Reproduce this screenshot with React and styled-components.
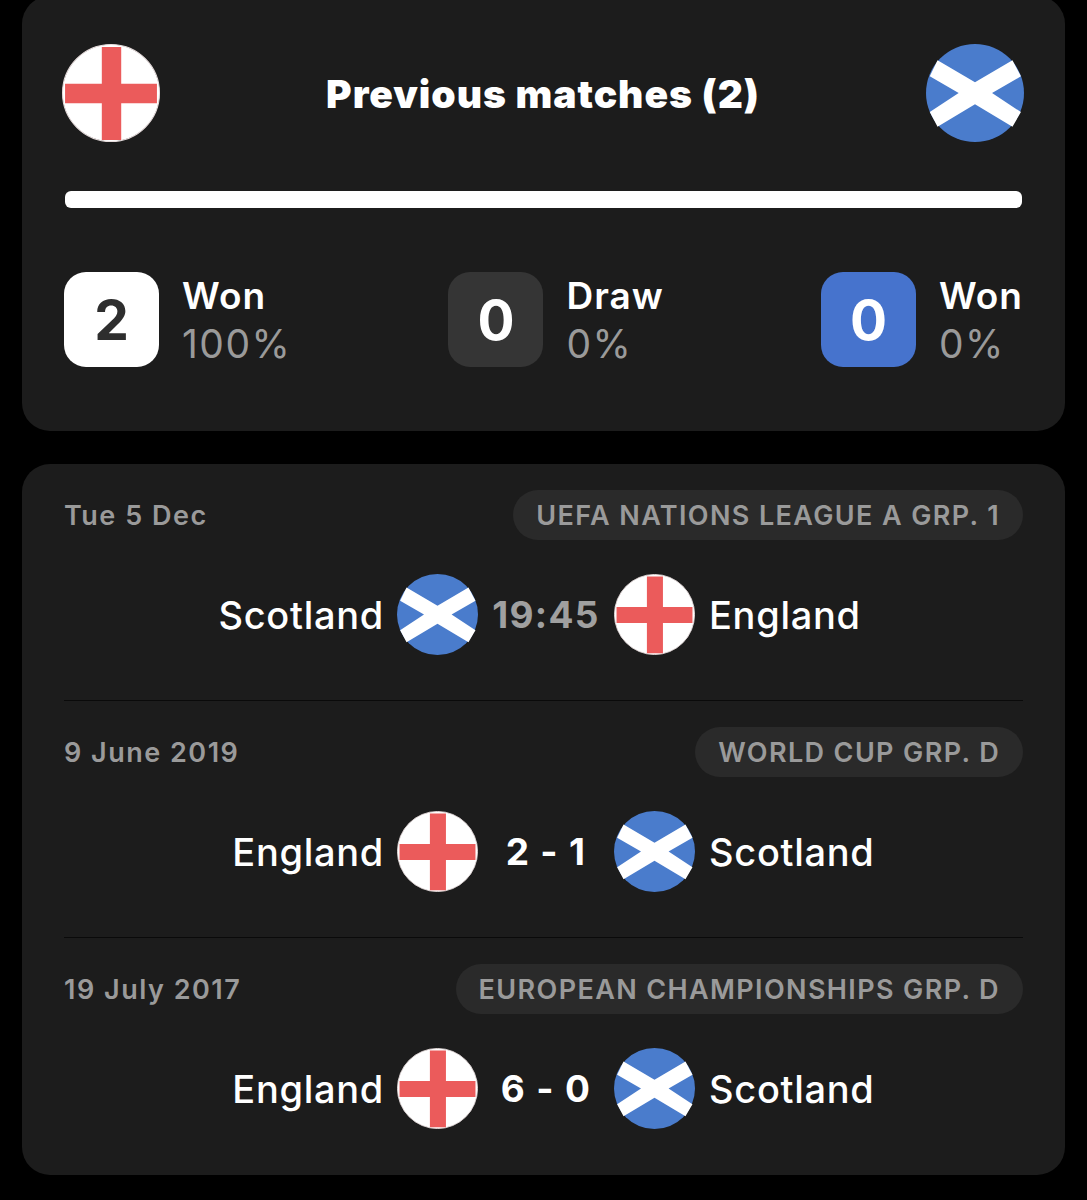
import styled, { createGlobalStyle } from "styled-components";

const GlobalStyle = createGlobalStyle`
  html, body {
    margin: 0;
    background: #000;
    overflow: hidden;
  }
  * {
    box-sizing: border-box;
  }
`;

const Page = styled.div`
  height: 1200px;
  padding: 0 22px;
  font-family: Inter, "Liberation Sans", sans-serif;
  color: #fff;
  display: flex;
  flex-direction: column;
  gap: 33px;
`;

const Card = styled.div`
  background: #1c1c1c;
  border-radius: 28px;
  padding: 0 42px;
`;

const SummaryCard = styled(Card)`
  height: 435px;
  margin-top: -4px;
  padding-top: 48px;
`;

const SummaryHead = styled.div`
  display: flex;
  align-items: center;
  justify-content: space-between;
  margin: 0 -1px 0 -2px;
`;

const Title = styled.h1`
  margin: 0;
  font-size: 39px;
  font-weight: 900;
  letter-spacing: 0.95px;
`;

const Bar = styled.div`
  height: 17px;
  margin: 49px 1px 64px 1px;
  background: #fff;
  border-radius: 6px;
`;

const Stats = styled.div`
  display: flex;
  justify-content: space-between;
`;

const Stat = styled.div`
  display: flex;
  align-items: center;
  gap: 23px;
`;

const StatBox = styled.div`
  width: 95px;
  height: 95px;
  border-radius: 22px;
  background: ${(p) => p.$bg};
  color: ${(p) => p.$fg};
  display: flex;
  align-items: center;
  justify-content: center;
  font-size: 55px;
  font-weight: 700;
`;

const StatLabel = styled.div`
  font-size: 37px;
  font-weight: 600;
  line-height: 48px;
  letter-spacing: 1px;
`;

const StatPct = styled.div`
  font-size: 39px;
  font-weight: 400;
  line-height: 47px;
  letter-spacing: 1.5px;
  color: #9a9a9a;
`;

const ListCard = styled(Card)`
  height: 711px;
`;

const Match = styled.div`
  height: 237px;
  padding-top: 26px;
  border-bottom: ${(p) => (p.$last ? "none" : "1px solid #0a0a0a")};
`;

const MatchTop = styled.div`
  display: flex;
  align-items: center;
  justify-content: space-between;
  height: 50px;
`;

const MatchDate = styled.div`
  font-size: 27px;
  font-weight: 600;
  letter-spacing: 1.5px;
  color: #9a9a9a;
`;

const League = styled.div`
  height: 50px;
  padding: 0 23px;
  border-radius: 25px;
  background: #2a2a2a;
  display: flex;
  align-items: center;
  font-size: 27px;
  font-weight: 600;
  letter-spacing: 1.37px;
  color: #9a9a9a;
`;

const MatchRow = styled.div`
  display: grid;
  grid-template-columns: 1fr 81px 136px 81px 1fr;
  align-items: center;
  margin-top: 34px;
  padding-left: 5px;
`;

const TeamName = styled.div`
  font-size: 38px;
  font-weight: 500;
  letter-spacing: 0.7px;
  text-align: ${(p) => (p.$right ? "right" : "left")};
  padding: ${(p) => (p.$right ? "0 13px 0 0" : "0 0 0 14px")};
`;

const Score = styled.div`
  text-align: center;
  font-size: 37px;
  font-weight: 700;
  letter-spacing: 1.3px;
  color: ${(p) => (p.$muted ? "#a0a0a0" : "#fff")};
`;

const FlagSvg = styled.svg`
  display: block;
  width: ${(p) => p.$size}px;
  height: ${(p) => p.$size}px;
`;

const EnglandFlag = ({ size }) => (
  <FlagSvg $size={size} viewBox="0 0 96 96">
    <circle cx="48" cy="48" r="47.5" fill="#fff" stroke="#e6dcdc" strokeWidth="1" />
    <path d="M39 3h19v91H39zM3 39h90v19H3z" fill="#eb5b5b" />
  </FlagSvg>
);

const ScotlandFlag = ({ size }) => (
  <FlagSvg $size={size} viewBox="0 0 96 96">
    <circle cx="48" cy="48" r="48" fill="#4a7ccc" />
    <path
      d="M11.3 16 48 37.5 84.7 16 93 31.7 64.7 48 93 66.7 84.7 81 48 59 11.3 81 3.7 66.7 32 48 3.7 31.7Z"
      fill="#fff"
    />
  </FlagSvg>
);

const flags = { England: EnglandFlag, Scotland: ScotlandFlag };

const stats = [
  { value: 2, label: "Won", pct: "100%", bg: "#fff", fg: "#2e2e2e" },
  { value: 0, label: "Draw", pct: "0%", bg: "#353535", fg: "#fff" },
  { value: 0, label: "Won", pct: "0%", bg: "#4673cd", fg: "#fff" },
];

const matches = [
  {
    date: "Tue 5 Dec",
    league: "UEFA NATIONS LEAGUE A GRP. 1",
    home: "Scotland",
    away: "England",
    score: "19:45",
    muted: true,
  },
  {
    date: "9 June 2019",
    league: "WORLD CUP GRP. D",
    home: "England",
    away: "Scotland",
    score: "2 - 1",
  },
  {
    date: "19 July 2017",
    league: "EUROPEAN CHAMPIONSHIPS GRP. D",
    home: "England",
    away: "Scotland",
    score: "6 - 0",
  },
];

const App = () => {
  return (
    <Page>
      <GlobalStyle />
      <SummaryCard>
        <SummaryHead>
          <EnglandFlag size={98} />
          <Title>Previous matches (2)</Title>
          <ScotlandFlag size={98} />
        </SummaryHead>
        <Bar />
        <Stats>
          {stats.map((s, i) => (
            <Stat key={i}>
              <StatBox $bg={s.bg} $fg={s.fg}>
                {s.value}
              </StatBox>
              <div>
                <StatLabel>{s.label}</StatLabel>
                <StatPct>{s.pct}</StatPct>
              </div>
            </Stat>
          ))}
        </Stats>
      </SummaryCard>
      <ListCard>
        {matches.map((m, i) => {
          const Home = flags[m.home];
          const Away = flags[m.away];
          return (
            <Match key={i} $last={i === matches.length - 1}>
              <MatchTop>
                <MatchDate>{m.date}</MatchDate>
                <League>{m.league}</League>
              </MatchTop>
              <MatchRow>
                <TeamName $right>{m.home}</TeamName>
                <Home size={81} />
                <Score $muted={m.muted}>{m.score}</Score>
                <Away size={81} />
                <TeamName>{m.away}</TeamName>
              </MatchRow>
            </Match>
          );
        })}
      </ListCard>
    </Page>
  );
};

export default App;
